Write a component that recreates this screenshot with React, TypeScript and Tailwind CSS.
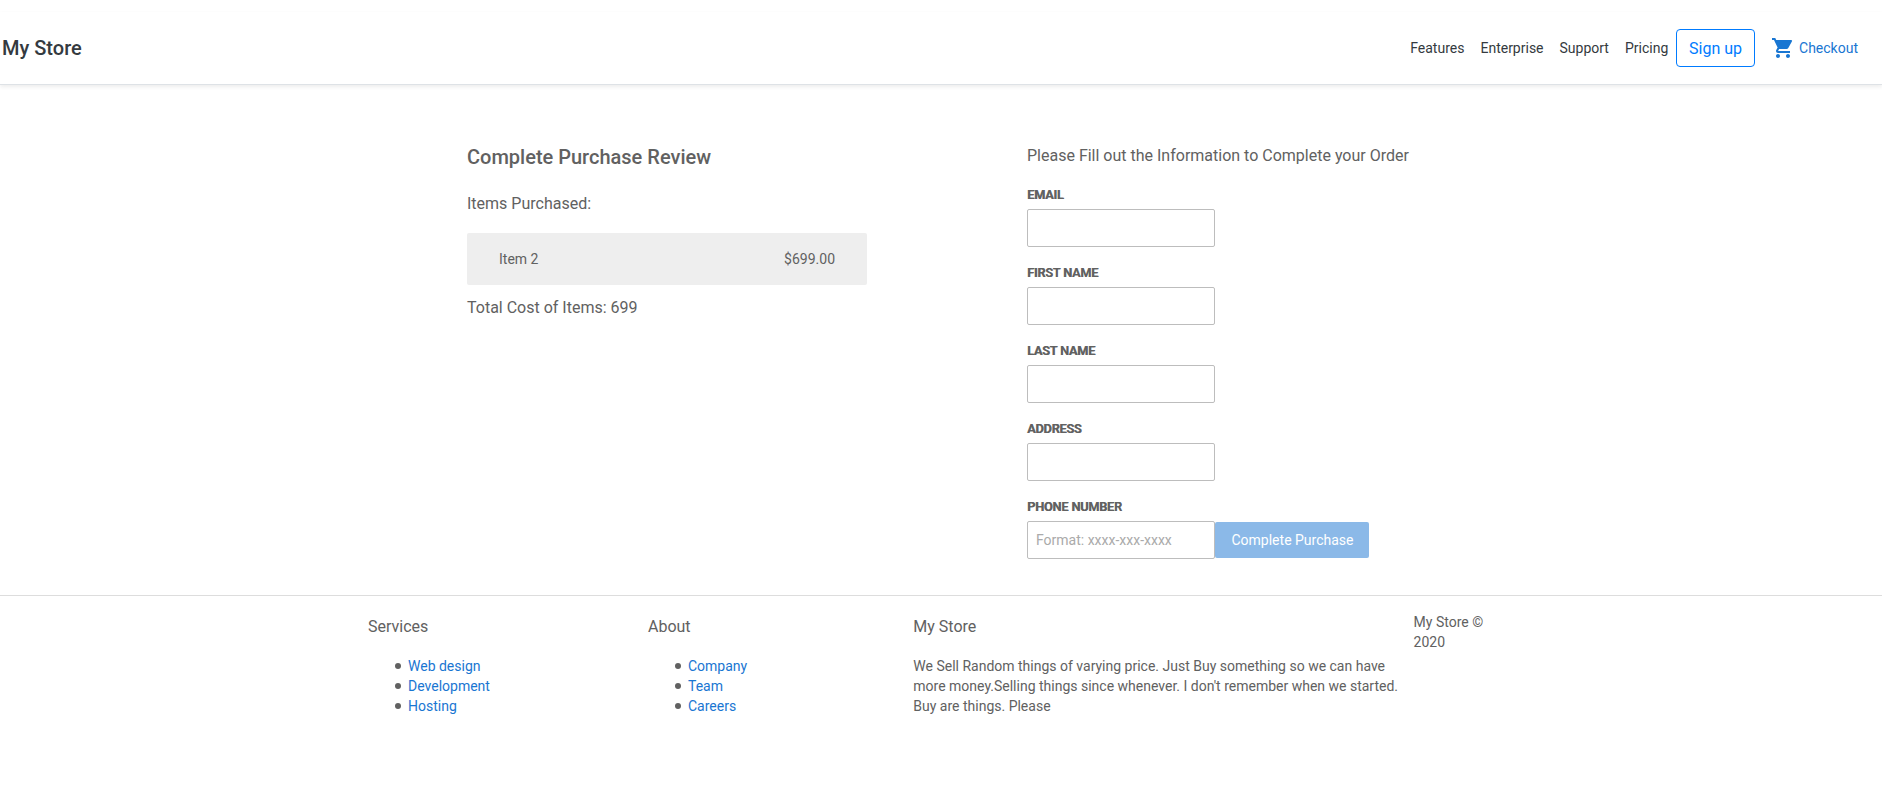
import React from "react";
import { MdShoppingCart } from "react-icons/md";

const navLinks = ["Features", "Enterprise", "Support", "Pricing"];
const fields = ["Email", "First Name", "Last Name", "Address"];
const services = ["Web design", "Development", "Hosting"];
const about = ["Company", "Team", "Careers"];

function Header() {
  return (
    <header className="mt-3 flex h-[73px] items-center justify-between border-b border-[#dee2e6] bg-white pr-6 pl-[2px] shadow-[0_2px_4px_rgba(0,0,0,0.075)]">
      <h1 className="text-[20px] leading-6 font-medium text-[#343a40]">My Store</h1>
      <div className="flex items-center">
        <nav className="flex gap-4 pr-[7.8px] text-sm text-[#343a40]">
          {navLinks.map((link) => (
            <a key={link} href="#">{link}</a>
          ))}
        </nav>
        <a href="#" className="flex h-[38px] items-center rounded border border-[#007bff] px-3 pt-px text-base text-[#007bff]">
          Sign up
        </a>
        <a href="#" className="ml-4 flex items-center gap-1 text-sm text-[#1976d2]">
          <MdShoppingCart className="size-6" />
          Checkout
        </a>
      </div>
    </header>
  );
}

function Label({ children }: { children: React.ReactNode }) {
  return (
    <label className="mb-1 block text-[12.5px] leading-[20px] font-medium tracking-[-0.05px] uppercase [text-shadow:0.7px_0_currentColor]">
      {children}
    </label>
  );
}

function LinkList({ title, items }: { title: string; items: string[] }) {
  return (
    <div>
      <h3 className="text-base leading-5">{title}</h3>
      <ul className="mt-[19px] pl-[27px] text-sm leading-5">
        {items.map((item) => (
          <li key={item} className="flex items-center gap-[7px]">
            <span className="size-[6px] rounded-full bg-[#616161]" />
            <a href="#" className="text-[#1976d2]">{item}</a>
          </li>
        ))}
      </ul>
    </div>
  );
}

const inputClass =
  "block h-[38px] w-[188px] rounded-[2px] border border-[#bdbdbd] bg-white px-2 text-sm placeholder:text-[#aaaaaa]";

export default function App() {
  return (
    <div className="flow-root h-[793px] overflow-hidden bg-white font-[Roboto,sans-serif] text-[#616161]">
      <Header />
      <main className="flex h-[510px] gap-40 pl-[467px]">
        <section className="w-[400px] pt-[60px]">
          <h2 className="text-[20px] leading-6 font-medium">Complete Purchase Review</h2>
          <h3 className="mt-[25px] text-base leading-5">Items Purchased:</h3>
          <div className="mt-[19px] flex h-[52px] items-center justify-between rounded-[2px] bg-[#eeeeee] px-8 text-sm">
            <span>Item 2</span>
            <span>$699.00</span>
          </div>
          <h3 className="mt-[13px] text-base leading-5">Total Cost of Items: 699</h3>
        </section>
        <form className="pt-[61px]">
          <h3 className="mb-[19px] text-base leading-5">Please Fill out the Information to Complete your Order</h3>
          {fields.map((field) => (
            <div key={field} className="mb-4">
              <Label>{field}</Label>
              <input className={inputClass} />
            </div>
          ))}
          <Label>Phone Number</Label>
          <div className="flex items-center">
            <input className={inputClass} placeholder="Format: xxxx-xxx-xxxx" />
            <button type="button" disabled className="h-9 w-[154px] rounded-[2px] bg-[#1976d2] pl-px text-sm text-white opacity-50">
              Complete Purchase
            </button>
          </div>
        </form>
      </main>
      <footer className="grid grid-cols-[280px_265.3px_500.3px_84px] border-t border-[#dddddd] pt-[21px] pl-[368px]">
        <LinkList title="Services" items={services} />
        <LinkList title="About" items={about} />
        <div>
          <h3 className="text-base leading-5">My Store</h3>
          <p className="mt-[19px] w-[490px] text-sm leading-5">
            We Sell Random things of varying price. Just Buy something so we can have more money.Selling things since
            whenever. I don't remember when we started. Buy are things. Please
          </p>
        </div>
        <p className="-mt-[5px] text-sm leading-5">My Store © 2020</p>
      </footer>
    </div>
  );
}
